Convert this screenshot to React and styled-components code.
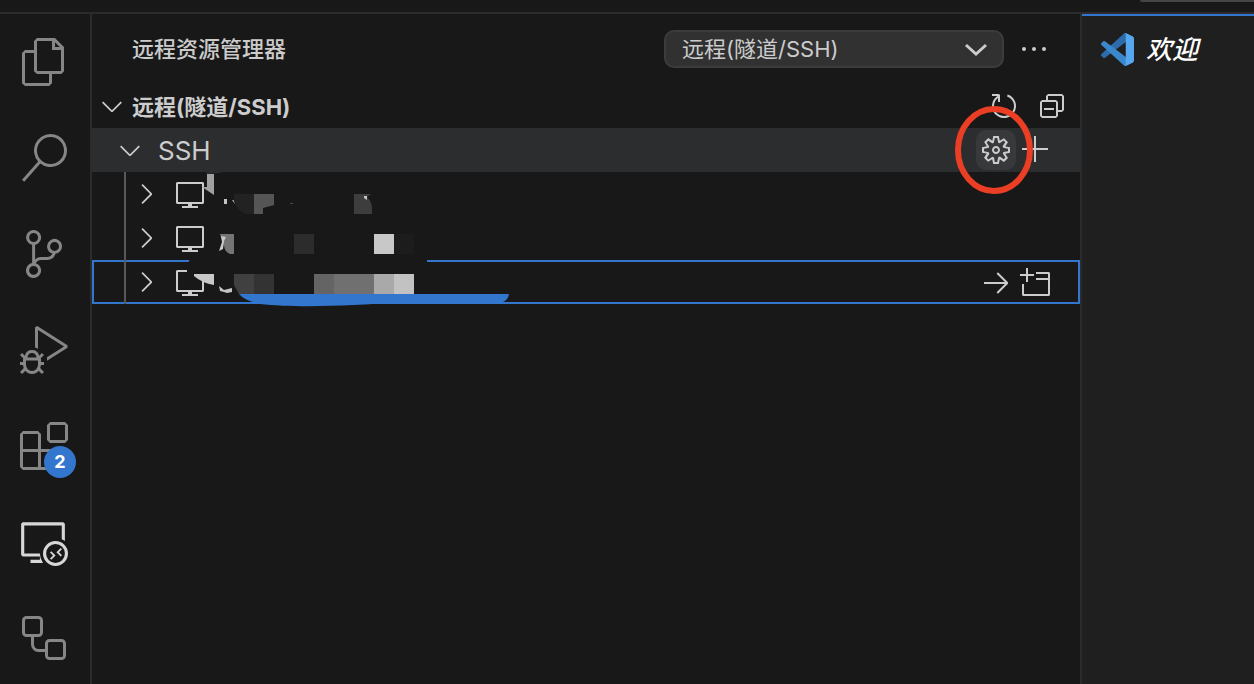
import React from 'react'
import styled, { createGlobalStyle, css } from 'styled-components'
import {
  VscAdd,
  VscArrowRight,
  VscChevronDown,
  VscChevronRight,
  VscCollapseAll,
  VscDebugAlt,
  VscEllipsis,
  VscEmptyWindow,
  VscExtensions,
  VscFiles,
  VscGear,
  VscRefresh,
  VscRemoteExplorer,
  VscSearch,
  VscSourceControl,
  VscVm,
} from 'react-icons/vsc'

const colors = {
  bg: '#181818',
  editor: '#1f1f1f',
  border: '#2b2b2b',
  text: '#cccccc',
  muted: '#868686',
  active: '#d7d7d7',
  hover: '#2c2d2f',
  blue: '#3376cd',
  red: '#ea3f25',
}

/*-----------------------------------------------------------------------------
  Global
------------------------------------------------------------------------------*/
const GlobalStyle = createGlobalStyle`
  * {
    box-sizing: border-box;
  }

  body {
    margin: 0;
    background: ${colors.bg};
    color: ${colors.text};
    font-family: Inter, 'Noto Sans CJK SC', sans-serif;
    font-size: 22px;
  }

  button,
  select {
    font: inherit;
    color: inherit;
  }

  svg {
    display: block;
    flex-shrink: 0;
  }
`

/*-----------------------------------------------------------------------------
  Window
------------------------------------------------------------------------------*/
const Window = styled.div`
  display: flex;
  flex-direction: column;
  height: 100vh;
  overflow: hidden;
`

const TitleBar = styled.header`
  display: flex;
  flex-shrink: 0;
  justify-content: flex-end;
  height: 14px;
  border-bottom: 2px solid ${colors.border};
`

const CommandCenter = styled.div`
  width: 114px;
  height: 2px;
  background: #454545;
  border-bottom-left-radius: 4px;
`

const Workbench = styled.div`
  display: flex;
  flex: 1;
  min-height: 0;
`

/*-----------------------------------------------------------------------------
  Activity Bar
------------------------------------------------------------------------------*/
const ActivityBar = styled.nav`
  display: flex;
  flex-direction: column;
  flex-shrink: 0;
  width: 92px;
  border-right: 2px solid ${colors.border};
`

const ActivityButton = styled.button`
  position: relative;
  display: flex;
  flex-shrink: 0;
  align-items: center;
  height: 96px;
  padding: 0 0 0 20px;
  background: none;
  border: 0;
  color: ${({ $active }) => ($active ? colors.active : colors.muted)};
`

const Badge = styled.span`
  position: absolute;
  right: 14px;
  bottom: 16px;
  width: 32px;
  height: 32px;
  border-radius: 50%;
  background: ${colors.blue};
  color: #fff;
  font-size: 18px;
  font-weight: 700;
  line-height: 32px;
  text-align: center;
`

/*-----------------------------------------------------------------------------
  Side Bar
------------------------------------------------------------------------------*/
const SideBar = styled.aside`
  flex: 1;
  min-width: 0;
  border-right: 2px solid ${colors.border};
`

const SideBarHeader = styled.div`
  display: flex;
  align-items: center;
  height: 70px;
  padding: 0 30px 0 40px;
`

const Title = styled.h2`
  flex: 1;
  margin: 0;
  padding-bottom: 4px;
  font-size: 22px;
  font-weight: 500;
`

const SelectBox = styled.div`
  position: relative;
  width: 340px;
  margin-right: 14px;

  svg {
    position: absolute;
    top: 12px;
    right: 16px;
    pointer-events: none;
  }
`

const Select = styled.select`
  display: block;
  width: 100%;
  height: 38px;
  padding: 0 40px 0 16px;
  appearance: none;
  background: #313131;
  border: 2px solid #3c3c3c;
  border-radius: 10px;
`

const IconButton = styled.button`
  display: flex;
  align-items: center;
  justify-content: center;
  width: ${({ $narrow }) => ($narrow ? '32px' : '40px')};
  height: 40px;
  padding: 0;
  border: 0;
  border-radius: 10px;
  background: ${({ $hovered }) => ($hovered ? '#38393b' : 'transparent')};
`

const SectionHeader = styled.div`
  display: flex;
  align-items: center;
  height: 44px;
  padding: 0 8px 0 4px;
`

const SectionTitle = styled.h3`
  flex: 1;
  margin: 0 0 0 4px;
  padding-bottom: 2px;
  font-size: 22px;
  font-weight: 700;
`

const Actions = styled.div`
  display: flex;
  gap: ${({ $wide }) => ($wide ? '8px' : '0')};
`

/*-----------------------------------------------------------------------------
  Tree
------------------------------------------------------------------------------*/
const Group = styled.div`
  position: relative;
  display: flex;
  align-items: center;
  justify-content: space-between;
  height: 44px;
  padding: 0 24px 0 22px;
  background: ${colors.hover};
`

const GroupLabel = styled.div`
  display: flex;
  align-items: center;
  gap: 12px;
  font-size: 26px;
`

const Hosts = styled.div`
  position: relative;
`

const Host = styled.div`
  display: flex;
  align-items: center;
  height: 44px;
  padding: 0 24px 0 32px;
  ${({ $focused }) =>
    $focused &&
    css`
      box-shadow: inset 0 0 0 2px ${colors.blue};
    `}
`

const Guide = styled.span`
  align-self: stretch;
  width: 2px;
  margin-right: 4px;
  background: #585858;
`

const HostIcon = styled.span`
  flex: 1;
  margin-left: 12px;
`

const Smudge = styled.svg`
  position: absolute;
  top: 0;
  left: 0;
  pointer-events: none;
`

const Ring = styled.svg`
  position: absolute;
  top: -26px;
  right: 44px;
  z-index: 1;
  pointer-events: none;
`

/*-----------------------------------------------------------------------------
  Editor
------------------------------------------------------------------------------*/
const Editor = styled.main`
  flex-shrink: 0;
  width: 172px;
  background: ${colors.editor};
`

const Tab = styled.div`
  display: flex;
  align-items: center;
  gap: 12px;
  height: 68px;
  padding-left: 19px;
  border-top: 2px solid ${colors.blue};
  color: #fff;
  font-size: 26px;
  font-style: italic;
`

const TabLabel = styled.span`
  padding-bottom: 4px;
  font-weight: 500;
`

const LinkedSquares = () => (
  <svg width="48" height="48" fill="none" stroke="currentColor" strokeWidth="3">
    <rect x="3.5" y="3.5" width="18" height="18" rx="3" />
    <rect x="26.5" y="26.5" width="18" height="18" rx="3" />
    <path d="M12.5 21.5v9a6 6 0 0 0 6 6h8" />
  </svg>
)

const CodeLogo = () => (
  <svg width="33" height="33" viewBox="0 0 100 100">
    <path fill="#2d6bab" d="M96.46 10.8 75.86.88a6.23 6.23 0 0 0-7.1 1.2L1.3 63.6a4.17 4.17 0 0 0 0 6.17l5.51 5a4.17 4.17 0 0 0 5.32.24l81.23-61.6c2.73-2.1 6.65-.15 6.65 3.29z" />
    <path fill="#3b87cc" d="M96.46 89.2 75.86 99.12a6.23 6.23 0 0 1-7.1-1.2L1.3 36.4a4.17 4.17 0 0 1 0-6.17l5.51-5a4.17 4.17 0 0 1 5.32-.24l81.23 61.6c2.73 2.1 6.65.15 6.65-3.29z" />
    <path fill="#56a7f0" d="M75.86 99.13a6.23 6.23 0 0 1-7.1-1.21c2.3 2.3 6.24.67 6.24-2.59V4.67c0-3.26-3.94-4.89-6.25-2.59a6.23 6.23 0 0 1 7.1-1.2l20.6 9.9A6.25 6.25 0 0 1 100 16.4v67.18c0 2.4-1.38 4.6-3.54 5.63z" />
  </svg>
)

// Mosaic brush strokes that hide the host names
const HostSmudge = () => (
  <Smudge width="440" height="140" viewBox="92 172 440 140">
    <path fill={colors.bg} d="M190 259h237v6H187zM187 262h31v13h-31z" />

    <path fill="#a0a0a0" d="M207 174h7v21l-12-8h5z" />
    <path fill={colors.hover} d="M206 172h18l-5 1-12 1z" />
    <path fill="#c4c4c4" d="M224 199h3v5h-3zM232 200l5 1v3h-2z" />
    <path fill="#222" d="M234 194h20v20h-8q-9-4-12-12z" />
    <path fill="#555" d="M254 194h20v11l-11 3v6h-9z" />
    <path fill="#4a4a4a" d="M290 203h3v1h-3z" />
    <path fill="#3d3d3d" d="M354 194h17l-4 3q5 5 5 11v6h-18z" />
    <path fill="#c4c4c4" d="M364 196h3v4l-3-2z" />

    <path fill="#747474" d="M220 234h14v20h-4q-5-2-6-8z" />
    <path fill="#c8c8c8" d="M221 236l5 1-2 4-1 8-4 2 3-9z" />
    <path fill="#2c2c2c" d="M294 234h20v20h-20z" />
    <path fill="#c8c8c8" d="M374 234h20v20h-20z" />
    <path fill="#1c1c1c" d="M394 234h20v20h-20z" />

    <path fill="#c8c8c8" d="M194 274h20v11q-12-2-20-9z" />
    <path fill="#c4c4c4" d="M219 286l5 4 8-2v4l-5 1-3-1-4-1z" />
    <path fill="#404040" d="M234 274h20v20h-15l-5-9z" />
    <path fill="#333" d="M254 274h20v20h-20z" />
    <path fill="#646464" d="M314 274h20v20h-20z" />
    <path fill="#707070" d="M334 274h40v20h-40z" />
    <path fill="#a9a9a9" d="M374 274h20v20h-20z" />
    <path fill="#c2c2c2" d="M394 274h20v20h-20z" />
    <path fill={colors.blue} d="M239 294h270q-1 6-6 8H400c-50 4-104 6-140 2q-15-3-21-10z" />
  </Smudge>
)

const activities = [
  { label: '资源管理器', icon: <VscFiles size={48} /> },
  { label: '搜索', icon: <VscSearch size={48} /> },
  { label: '源代码管理', icon: <VscSourceControl size={48} /> },
  { label: '运行和调试', icon: <VscDebugAlt size={48} /> },
  { label: '扩展', icon: <VscExtensions size={48} />, badge: 2 },
  { label: '远程资源管理器', icon: <VscRemoteExplorer size={48} />, active: true },
  { label: '引用', icon: <LinkedSquares /> },
]

const hosts = [{ id: 1 }, { id: 2 }, { id: 3, focused: true }]

export default function App() {
  return (
    <Window>
      <GlobalStyle />
      <TitleBar>
        <CommandCenter />
      </TitleBar>
      <Workbench>
        <ActivityBar>
          {activities.map(({ label, icon, badge, active }) => (
            <ActivityButton key={label} aria-label={label} $active={active}>
              {icon}
              {badge && <Badge>{badge}</Badge>}
            </ActivityButton>
          ))}
        </ActivityBar>

        <SideBar>
          <SideBarHeader>
            <Title>远程资源管理器</Title>
            <SelectBox>
              <Select aria-label="远程类型">
                <option>远程(隧道/SSH)</option>
              </Select>
              <svg width="24" height="16" fill="none" stroke="currentColor" strokeWidth="3">
                <path d="M2 3l10 9 10-9" />
              </svg>
            </SelectBox>
            <IconButton $narrow aria-label="更多操作"><VscEllipsis size={32} /></IconButton>
          </SideBarHeader>

          <SectionHeader>
            <VscChevronDown size={32} />
            <SectionTitle>远程(隧道/SSH)</SectionTitle>
            <Actions $wide>
              <IconButton aria-label="刷新"><VscRefresh size={32} /></IconButton>
              <IconButton aria-label="全部折叠"><VscCollapseAll size={32} /></IconButton>
            </Actions>
          </SectionHeader>

          <Group>
            <GroupLabel>
              <VscChevronDown size={32} />
              SSH
            </GroupLabel>
            <Actions>
              <IconButton $hovered aria-label="打开 SSH 配置文件"><VscGear size={32} /></IconButton>
              <IconButton aria-label="新建远程"><VscAdd size={32} /></IconButton>
            </Actions>
            <Ring width="84" height="96" fill="none" stroke={colors.red} strokeWidth="6">
              <ellipse cx="42" cy="48" rx="36" ry="41" />
            </Ring>
          </Group>

          <Hosts>
            {hosts.map(({ id, focused }) => (
              <Host key={id} $focused={focused}>
                <Guide />
                <VscChevronRight size={32} />
                <HostIcon><VscVm size={32} /></HostIcon>
                {focused && (
                  <Actions>
                    <IconButton aria-label="在当前窗口中连接"><VscArrowRight size={32} /></IconButton>
                    <IconButton aria-label="在新窗口中连接"><VscEmptyWindow size={32} /></IconButton>
                  </Actions>
                )}
              </Host>
            ))}
            <HostSmudge />
          </Hosts>
        </SideBar>

        <Editor>
          <Tab>
            <CodeLogo />
            <TabLabel>欢迎</TabLabel>
          </Tab>
        </Editor>
      </Workbench>
    </Window>
  )
}
